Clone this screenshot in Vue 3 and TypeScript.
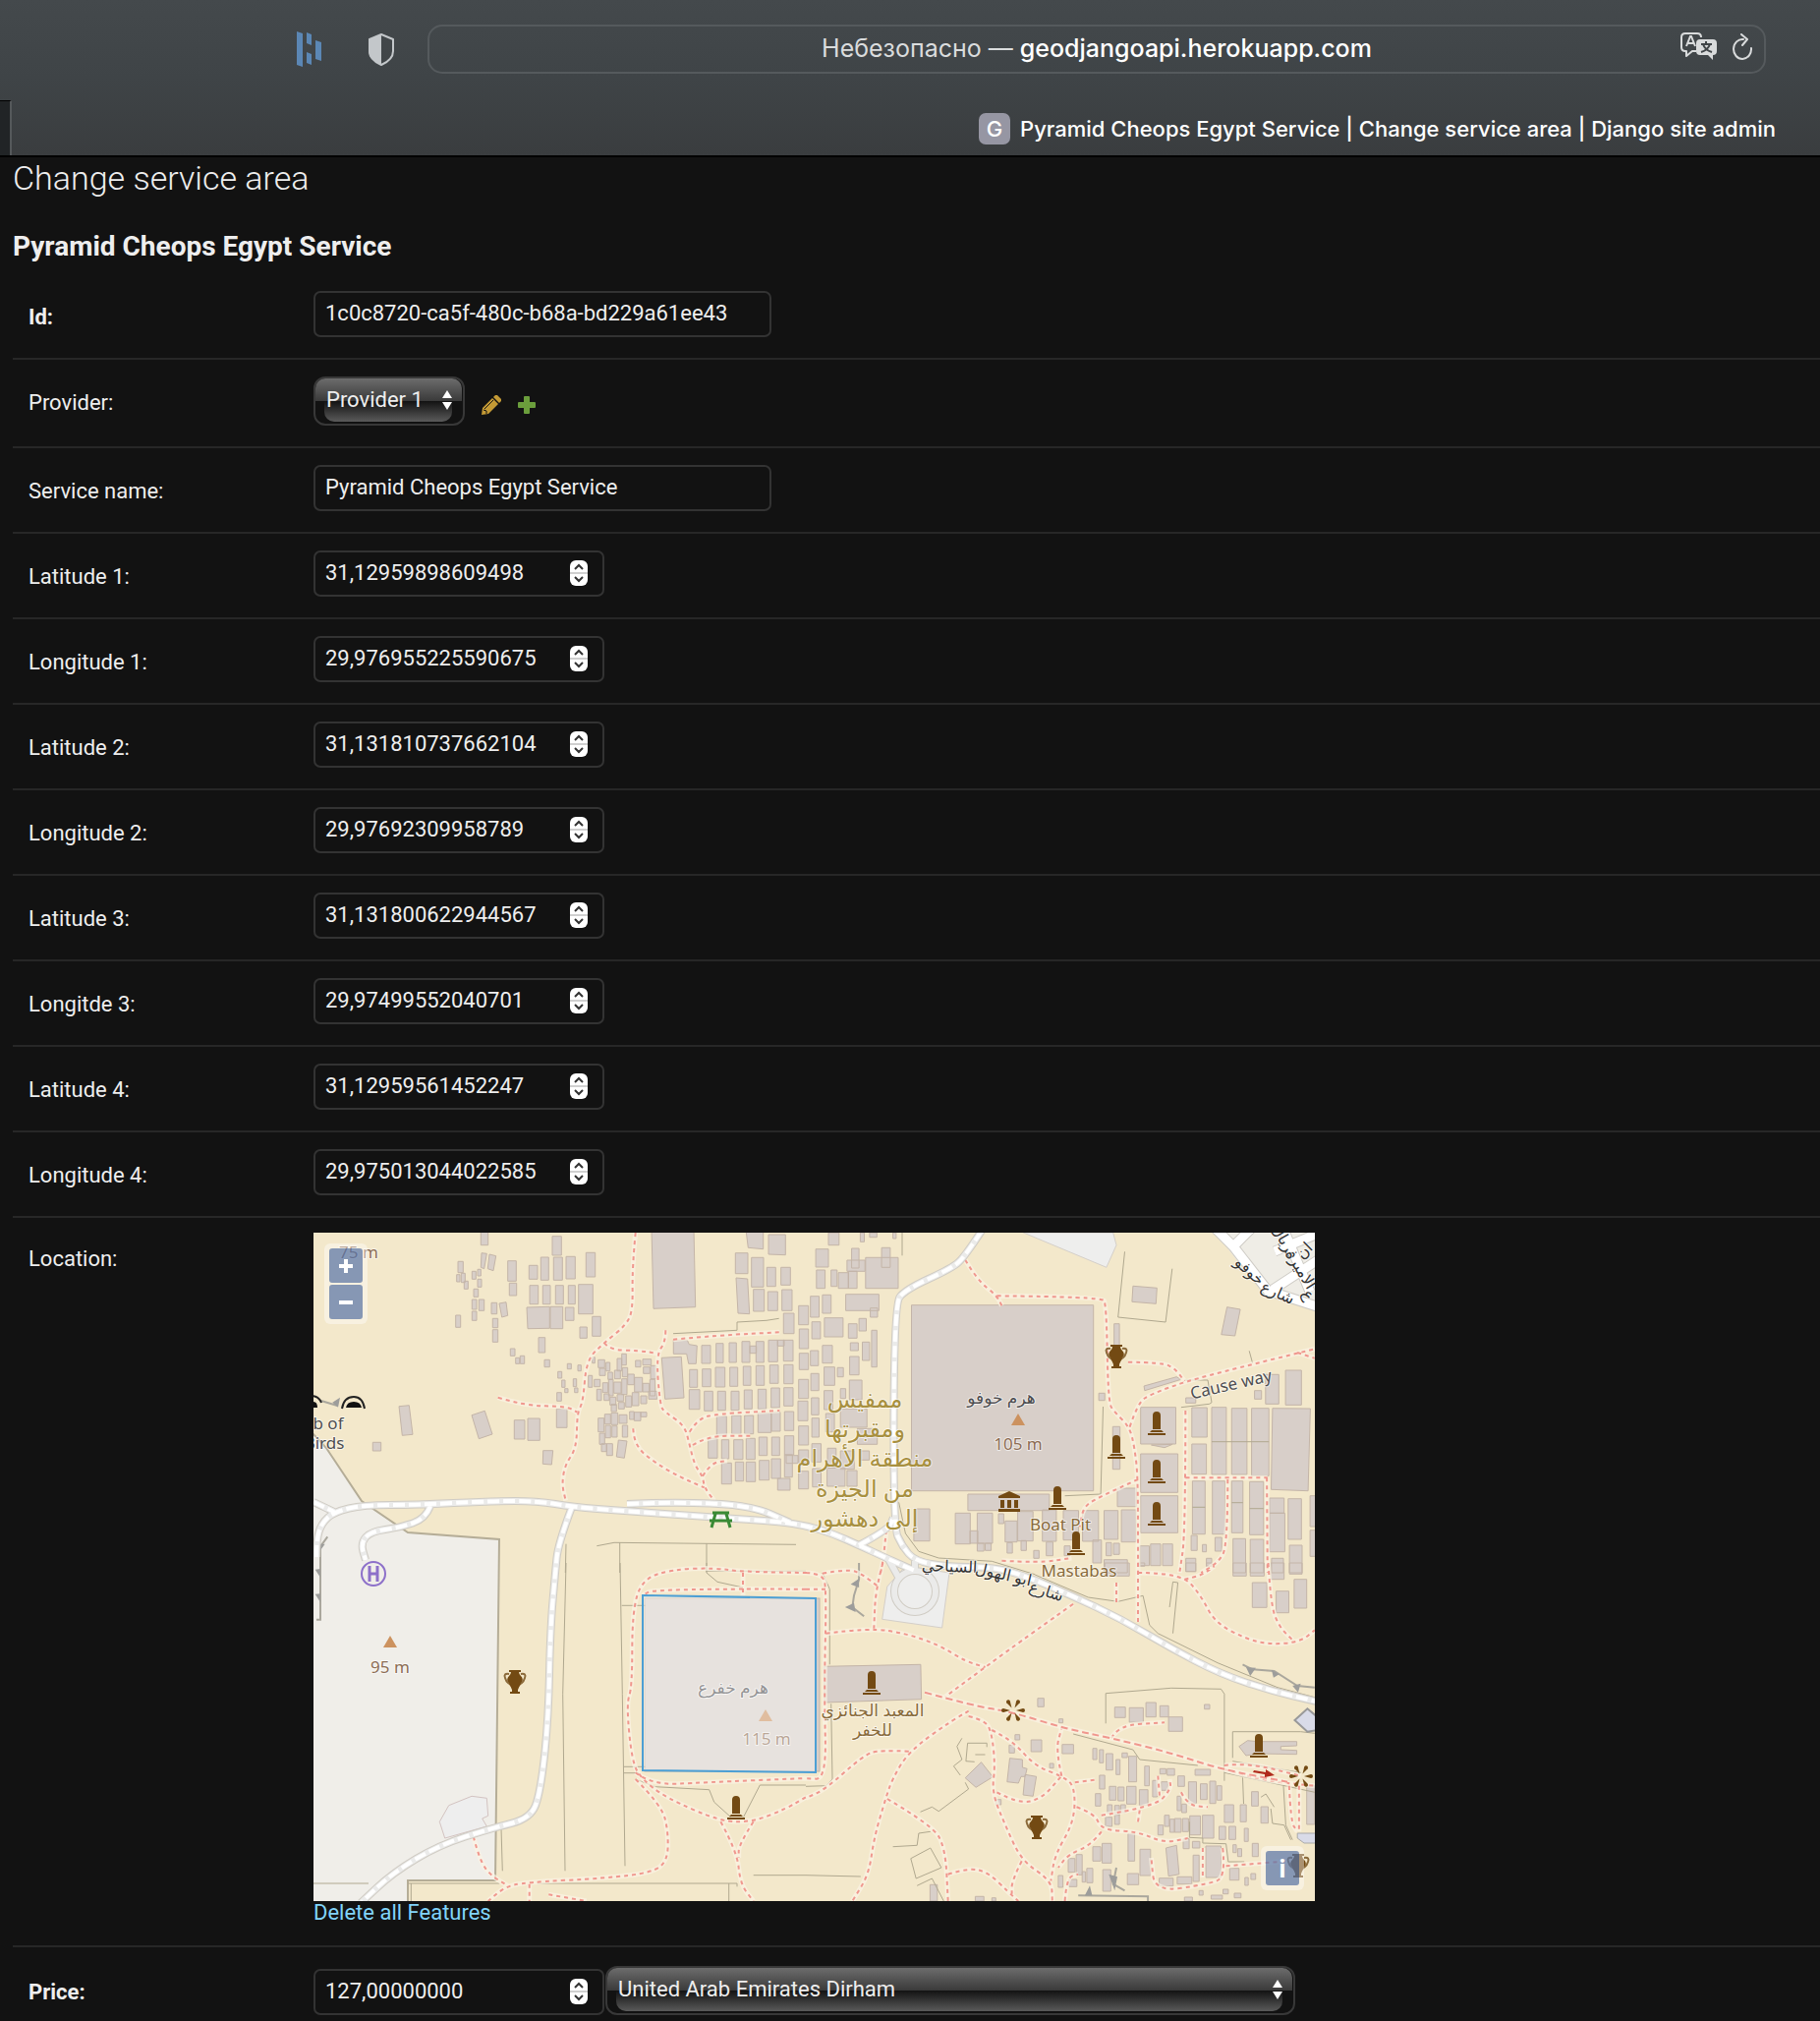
<script setup lang="ts">
import { ref } from 'vue'

interface Field {
  id: string
  label: string
  value: string
  kind: 'text' | 'provider' | 'number'
  required?: boolean
}

const fields = ref<Field[]>([
  { id: 'id', label: 'Id:', value: '1c0c8720-ca5f-480c-b68a-bd229a61ee43', kind: 'text', required: true },
  { id: 'provider', label: 'Provider:', value: 'Provider 1', kind: 'provider' },
  { id: 'service_name', label: 'Service name:', value: 'Pyramid Cheops Egypt Service', kind: 'text' },
  { id: 'lat1', label: 'Latitude 1:', value: '31,12959898609498', kind: 'number' },
  { id: 'lon1', label: 'Longitude 1:', value: '29,976955225590675', kind: 'number' },
  { id: 'lat2', label: 'Latitude 2:', value: '31,131810737662104', kind: 'number' },
  { id: 'lon2', label: 'Longitude 2:', value: '29,97692309958789', kind: 'number' },
  { id: 'lat3', label: 'Latitude 3:', value: '31,131800622944567', kind: 'number' },
  { id: 'lon3', label: 'Longitde 3:', value: '29,97499552040701', kind: 'number' },
  { id: 'lat4', label: 'Latitude 4:', value: '31,12959561452247', kind: 'number' },
  { id: 'lon4', label: 'Longitude 4:', value: '29,975013044022585', kind: 'number' },
])
const price = ref('127,00000000')
const currency = ref('United Arab Emirates Dirham')

/* The map is stored as four sheets, each with its own origin and scale. */
type Sheet = 'nw' | 'ne' | 'sw' | 'se'
const sheets: Record<Sheet, [number, number, number, number]> = {
  nw: [-19, -14, 1 / 3, 1 / 3],
  ne: [501, -14, 0.338, 1 / 3],
  sw: [-19, 336, 1 / 3, 1 / 3],
  se: [501, 336, 0.338, 1 / 3],
}

function project(sheet: Sheet, list: string): [number, number][] {
  const [ox, oy, sx, sy] = sheets[sheet]
  const n = list.trim().split(/[\s,]+/).map(Number)
  const out: [number, number][] = []
  for (let i = 0; i + 1 < n.length; i += 2) {
    out.push([Math.round((ox + n[i] * sx) * 10) / 10, Math.round((oy + n[i + 1] * sy) * 10) / 10])
  }
  return out
}

function curve(p: [number, number][]): string {
  let d = `M${p[0][0]} ${p[0][1]}`
  for (let i = 1; i < p.length - 1; i++) {
    d += `Q${p[i][0]} ${p[i][1]} ${(p[i][0] + p[i + 1][0]) / 2} ${(p[i][1] + p[i + 1][1]) / 2}`
  }
  const e = p[p.length - 1]
  return d + `L${e[0]} ${e[1]}`
}

const curves = (s: Sheet, lists: string) => lists.split(';').map((l) => curve(project(s, l))).join('')
const lines = (s: Sheet, lists: string) =>
  lists.split(';').map((l) => 'M' + project(s, l).map((q) => q.join(' ')).join('L')).join('')
const boxes = (s: Sheet, lists: string) =>
  lists
    .split(';')
    .map((l) => {
      const [x, y, w, h] = l.trim().split(/\s+/).map(Number)
      return 'M' + project(s, `${x} ${y} ${x + w} ${y} ${x + w} ${y + h} ${x} ${y + h}`).map((q) => q.join(' ')).join('L') + 'Z'
    })
    .join('')
const shapes = (s: Sheet, lists: string) =>
  lists.split(';').map((l) => 'M' + project(s, l).map((q) => q.join(' ')).join('L') + 'Z').join('')
const polygons = (s: Sheet, lists: string[]) => shapes(s, lists.join(';'))

const buildings = [
  boxes('nw', `568 30 22 50;786 53 28 58;751 117 24 70;790 117 27 70;828 115 28 68;715 142 26 42;650 128 26 62;655 196 22 38;889 103 28 74;
    717 203 26 57;757 203 23 57;796 203 24 57;835 203 21 57;866 200 44 90;826 270 26 40;908 298 26 60;870 330 22 34;780 268 38 67;
    498 130 16 34;494 170 10 22;508 166 12 28;517 190 12 24;541 160 12 24;558 154 10 20;558 184 12 24;546 214 14 24;541 246 14 30;562 246 16 34;541 282 14 28;
    600 256 17 34;604 304 16 28;604 338 16 38;491 294 15 37;658 396 14 22;674 424 12 18;688 418 13 24;762 430 16 22;744 362 20 46;
    832 442 12 16;803 466 12 20;864 446 10 18;815 492 10 22;824 518 10 12;850 488 10 24;854 516 10 14;800 530 14 26;908 422 8 18;
    238 682 25 26;670 614 32 58;711 609 37 67;799 580 32 57;
    1345 104 38 63;1394 118 37 90;1441 148 27 58;1484 148 29 54;1400 215 33 67;1444 222 30 58;1487 216 31 64;1492 288 32 62;1538 265 30 58;1540 336 28 60;
    1242 386 27 55;1286 380 22 59;1326 378 22 60;1365 374 24 64;1408 374 24 64;1389 388 20 22;1446 370 28 66;1492 370 29 64;1474 370 20 18;
    1205 460 24 54;1244 458 26 54;1284 453 29 60;1328 453 24 58;1369 450 23 58;1408 448 25 60;1450 446 26 56;1493 445 28 58;1540 410 28 50;
    1204 521 32 60;1250 526 26 60;1291 526 24 58;1332 526 24 58;1372 522 24 58;1414 520 25 60;1454 516 26 60;1493 515 28 56;1538 490 30 58;
    1288 602 30 60;1334 600 28 56;1373 600 27 56;1414 592 40 60;1455 590 27 58;1495 588 28 58;1536 556 30 60;1538 632 30 58;
    1262 670 28 60;1303 674 22 58;1340 674 28 60;1378 670 27 64;1417 666 25 56;1456 666 24 56;1495 662 28 58;1500 722 36 24;
    1303 745 30 64;1345 742 25 58;1378 742 28 60;1418 737 30 60;1455 732 28 60;1495 720 24 68;1474 792 38 36;1538 705 30 40;1538 770 30 54;
    926 430 20 24;950 438 12 26;984 426 14 38;998 412 14 34;1040 432 16 20;1062 428 26 18;930 456 18 22;956 468 14 22;976 462 18 26;1000 454 16 28;1064 452 20 20;1086 448 18 40;
    896 478 12 36;914 490 18 22;940 500 16 30;958 490 14 50;974 498 22 34;998 488 16 48;1016 474 20 32;1037 484 24 44;1062 502 20 26;1084 490 16 50;
    922 520 14 34;944 534 16 20;962 544 18 24;984 536 20 20;1010 540 18 34;1030 530 20 40;1056 540 18 24;1080 526 26 24;966 566 16 22;988 560 18 20;
    926 608 18 42;946 596 18 30;966 592 20 36;990 598 24 26;1022 588 14 24;1036 590 20 26;1056 590 18 14;930 654 16 34;948 630 16 38;968 632 16 34;1000 630 16 36;936 686 16 24;952 686 18 36`),
  shapes('nw', `1089 30,1218 30,1223 269,1095 274;708 270,778 268,778 334,711 335;318 572,349 569,360 658,328 661;540 599,580 586,603 657,562 671;
    758 707,788 707,784 750,757 748;1156 370,1198 370,1204 383,1228 387,1225 442,1202 442,1196 412,1156 412;1120 424,1180 421,1188 546,1130 550;
    1378 40,1430 40,1430 92,1384 88;1446 48,1498 48,1498 110,1446 108;1347 180,1382 183,1388 290,1353 288;570 104,586 106,578 152,568 148;
    594 108,614 113,606 158,589 152;624 258,645 254,650 295,632 300;988 675,1014 678,1006 730,982 726`),
  boxes('ne', `318 263 548 567;68 42 32 38;30 92 38 55;138 90 22 60;124 126 54 34;228 88 26 60;180 118 98 94;98 164 30 48;128 160 26 52;32 156 26 56;76 156 18 50;
    192 42 22 14;164 42 12 28;262 42 10 18;14 236 26 64;50 232 26 56;120 230 100 50;194 272 22 28;56 302 56 58;18 314 26 52;128 320 26 44;160 304 22 38;
    134 378 24 24;170 376 22 56;198 340 16 112;50 386 30 54;14 402 24 46;132 420 28 56;55 452 32 56;95 454 18 28;15 472 24 52;131 492 38 60;
    55 524 26 58;104 518 16 30;17 546 22 52;60 594 26 56;104 580 80 56;18 608 22 58;155 640 60 48;65 700 26 60;18 686 28 56;165 708 26 28;104 708 42 56;64 760 54 56;20 762 26 56;124 768 30 48;
    325 885 48 98;450 898 45 94;516 898 46 92;494 952 24 38;516 990 20 24;540 990 18 22;600 922 36 64;580 900 16 30;638 893 46 90;606 988 16 32;648 982 16 30;
    712 888 42 96;775 890 46 90;833 890 48 94;898 890 42 88;950 888 44 98;724 986 20 42;686 1012 16 24;778 998 18 30;864 980 26 70;904 988 16 40;926 990 18 34;898 1040 70 40;
    488 840 245 50;938 822 58 56;882 532 18 22;928 320 16 66;924 634 22 130;1008 575 106 112;1008 717 112 118;1008 845 112 113;
    1162 576 46 90;1162 687 44 92;1222 575 44 205;1282 578 46 202;1342 578 52 206;1384 475 40 90;1444 462 48 106;1351 524 21 26;1144 546 30 16;
    1164 800 38 162;1224 800 38 162;1282 800 34 158;1336 802 42 162;1396 852 44 46;1396 898 46 118;1452 854 40 124;1402 1036 36 44;1456 996 38 84;1518 845 20 94;1518 950 20 80;
    1160 966 18 46;1194 994 12 22;1232 972 20 42;1286 976 38 104;1338 978 40 102;1006 998 28 60;1038 992 30 66;1074 992 30 66;1144 1036 30 40;1206 1036 16 24`),
  shapes('ne', `985 205,1057 211,1054 259,982 253;1268 269,1308 276,1292 357,1251 353;1405 578,1519 579,1512 830,1401 826;1018 510,1116 482,1130 490,1020 524;1040 690,1104 688,1080 698`),
  boxes('se', `930 440 32 32;974 442 42 44;1024 426 30 44;1066 436 26 34;1092 470 42 44;1200 432 16 14;698 413 19 26;762 476 12 12;630 524 14 16;612 556 16 24;678 540 32 36;734 612 12 14;572 722 16 16;
    1000 0 20 10;1144 0 30 26;1206 0 16 10;1286 0 40 40;1338 0 42 40;1400 0 40 50;1456 0 38 34;900 0 74 40;1344 60 44 76;1416 86 38 66;1470 50 38 88;
    772 554 34 28;864 566 12 34;884 570 12 40;904 582 20 50;934 600 12 46;952 580 16 14;972 590 24 78;1020 620 14 60;1066 628 18 16;1088 628 22 20;1172 630 46 18;
    884 648 16 42;914 682 20 42;940 684 18 42;966 682 28 54;1004 692 26 48;1044 664 14 50;1070 668 20 26;1120 650 20 32;1152 668 24 66;1188 674 20 48;1216 666 18 68;1238 680 14 44;
    872 704 16 38;908 738 14 26;930 740 14 30;948 738 14 24;902 776 20 28;930 768 14 30;1118 712 12 44;1132 736 14 26;1080 770 14 34;1096 782 14 40;1060 800 16 30;1110 780 20 42;1134 780 18 40;
    1156 772 32 58;1194 770 34 70;1244 804 20 40;1274 804 20 40;1260 738 28 54;1308 738 18 52;1342 698 20 44;1370 744 22 50;1136 842 18 30;1164 850 22 20;1320 810 12 40;1344 856 18 40;1286 860 10 24;1300 872 12 24;
    864 866 24 44;892 856 28 60;970 826 20 84;1006 874 32 80;1166 892 18 80;1204 864 46 96;790 902 20 42;814 890 18 62;846 932 18 44;832 942 10 32;894 936 24 66;968 948 34 34;760 954 14 36;792 966 24 22;
    1064 962 42 24;1118 958 44 22;1276 932 28 36;1322 960 10 24;1340 948 14 18;1220 1014 34 12;1256 996 16 14;1290 1008 20 14;1184 1000 12 14;1140 1020 24 12;510 1018 26 14;560 1022 12 10;374 982 22 50;
    1508 680 24 118`),
  shapes('se', `54 316,346 310,348 416,56 426;480 656,528 608,563 653,512 685;614 596,652 600,652 624,666 628,660 652,648 652,640 672,606 668;660 646,694 652,684 712,654 708;1084 870,1116 862,1124 950,1092 956;1304 560,1330 542,1360 545,1478 545,1478 558,1430 560,1430 570,1478 572,1478 584,1360 582,1325 588`),
].join('')

const footpaths = [
  curves('nw', `1040 42 1030 150 1032 280 1010 325 945 378 890 430 880 560 862 590 860 700 825 750 815 810 827 860;945 378 960 400 1050 402 1105 410;
    1132 340 1132 375 1103 415 1115 570 1130 590 1190 630 1205 690 1220 750 1245 785 1250 820 1280 860;1155 368 1300 355 1480 346;620 545 700 570 830 572 862 590;
    1033 640 1035 690 1100 745 1180 790 1250 820;1205 650 1230 610 1290 595 1480 585;1215 690 1260 662 1390 662;1245 785 1270 745 1320 738`),
  curves('ne', `480 125 515 185 575 235 590 265;575 235 890 238 905 260 910 560 930 590 975 635 990 700 1000 790 1000 1080;970 437 1070 438 1110 455 1140 495;
    975 635 1000 560 1040 535 1140 497 1300 455 1532 397;1480 408 1532 425;1143 585 1143 960 1125 1080;1143 790 1270 790 1390 790;1388 790 1390 1080;
    1270 795 1270 1000 1240 1050 1190 1080;1000 795 880 850 835 880 825 940;590 1043 700 1050 800 1035;242 950 235 1030 225 1080`),
  curves('sw', `1563 30 1370 28 1280 15 1150 20 1060 50 1030 150 1030 380 1012 430 1030 610 1060 660 1130 715 1300 790 1400 790 1500 750 1560 715;1560 80 1100 78 1060 100;
    1368 30 1368 100;1040 640 1090 678 1250 670 1560 657;1040 660 1120 740 1140 820 1138 910 1090 945 950 962 700 975 640 990 590 1032;
    545 835 565 910 600 955 650 985;716 980 716 1032;775 1012 890 1032;1300 790 1350 880 1360 980 1400 1032;1400 790 1355 860 1355 900`),
  curves('se', `0 30 50 32 62 80 55 400 62 660 0 658;0 80 62 80;50 32 130 18 170 35 215 70;232 0 210 80 205 200;60 215 190 198 300 215 400 250 480 300 540 318;
    805 125 680 215 540 318 420 408;490 452 440 480 310 575 260 660 240 720 205 840 190 950 140 1032;310 575 220 570 170 590 60 690 0 718;
    490 468 540 480 560 520 570 620 560 700 600 800 650 910 740 970 742 1032;560 510 620 540 690 620 770 650 810 680 808 790 750 890 738 970;
    575 700 640 735 710 720 770 650;770 650 752 570 770 505;245 720 380 800 420 870 428 1032;428 950 490 930 550 945 610 1005 640 1032;650 910 620 970 620 1010;
    810 670 870 662;815 745 870 765 890 815 1000 820 1080 855 1150 840;890 820 860 860 790 890 760 930;890 770 1050 745 1100 690 1095 660;1060 650 1065 710;
    1130 700 1150 740 1210 745;1000 790 1005 755;920 535 940 495 1080 487;1000 0 1000 180;1000 30 1130 30 1190 100 1230 180 1320 230 1400 250 1490 240 1532 205;
    1140 50 1190 40 1230 10;1392 0 1400 130 1425 195 1465 235;935 60 935 120;1260 618 1330 610 1490 650;1260 630 1380 665 1532 680;1455 680 1460 790 1480 820;
    1485 680 1485 820;1195 870 1195 960;1255 870 1265 960 1210 980 1050 1005 1040 900;1265 925 1450 910;780 1032 785 960 820 950`),
].join('')

const processional = curves('se', '358 395 500 435 620 455 780 505 920 535 1100 580 1250 630 1450 668')

const walls = [
  lines('nw', `1155 350 1350 340 1350 315 1440 310 1478 304;922 998 975 988 1530 994;992 988 992 1080;1257 990 1257 1078;828 992 826 1080`),
  lines('ne', `290 42 290 112;960 100 940 300 1083 315 1103 152;895 573 888 840 780 845;1335 403 1345 440;1130 575 1215 565 1222 560 1210 492 1140 492;
    280 865 300 960 340 1015 400 1035 560 1045 690 1085;1222 680 1394 680;1164 880 1202 880;1282 866 1316 866;1336 884 1378 884`),
  lines('sw', `828 0 818 400 825 940;993 0 1000 400 1008 925;998 130 1070 130;1003 622 1070 622;1003 641 1050 641;1257 0 1257 30 1290 58 1368 75;1255 25 1560 25;
    1040 660 1100 683 1265 692 1280 730 1330 775;1370 775 1420 678 1560 678;630 810 634 940;740 978 1350 978 1350 988;1325 978 1325 1032;1400 953 1560 953;345 978 625 978;57 978 225 978;355 978 355 1032`),
  lines('se', `50 30 72 80 72 310;76 430 80 660 60 680 0 682;0 953 165 957;690 36 850 105 940 118 1015 100 1035 190 1060 215 1240 305 1420 380 1532 410;
    903 490 903 398 1100 382 1250 385 1260 400 1260 665;1095 135 1105 58 1120 60 1105 215;805 522 985 570 1005 600 1180 618;345 760 380 745 400 758 490 690 480 670;
    545 562 545 550 487 550 482 605 508 607;470 535 455 560 470 600 445 620 465 648;510 585 540 585;262 866 335 862 340 825 375 820;316 902 375 870 408 930 332 963 316 902;
    335 985 380 963 415 1032;1438 680 1445 800 1465 845;1315 655 1318 735;1370 715 1385 705 1410 745;1400 750 1405 795 1440 800 1460 845;
    1155 790 1155 838 1195 840 1195 855 1265 857 1272 912 1320 912;1260 640 1532 700;1285 605 1490 640;1285 595 1285 515 1490 515 1532 520`),
].join('')

const tracks =
  curve([[3, 330], [3, 313], [8, 296], [21, 284], [51, 277], [104, 277], [181, 273], [228, 273], [264, 279], [314, 283], [414, 290], [474, 294], [501, 298], [528, 306], [555, 318], [585, 332], [612, 344]]) +
  curve([[0, 274], [21, 284]]) +
  curve([[119, 278], [114, 291], [88, 300], [58, 304], [48, 316], [53, 333]]) +
  curve([[263, 279], [249, 316], [246, 346], [241, 403], [239, 496], [231, 569], [221, 596], [181, 606], [128, 623], [81, 651], [48, 682]]) +
  curve([[680, -2], [663, 24], [650, 36], [602, 58], [591, 73], [590, 299], [599, 319], [612, 334], [645, 340], [690, 340], [724, 349], [771, 369], [822, 393], [873, 423], [923, 449], [974, 466], [1021, 477]]) +
  curve([[555, 318], [585, 302], [590, 290]]) +
  curve([[319, 276], [364, 274], [444, 277], [485, 295]])

const ring = 'M633 365A21 21 0 1 1 591 365A21 21 0 1 1 633 365M585 332L595 350M612 334V345'
const streets = 'M914-8L936 14L971 59L1024 76M936 14L954-4M986-6L1014 60M978 19L1022 1M976 58L1022 28'
const gardens = polygons('ne', ['655 42,905 148,935 80,925 42']) + polygons('se', ['245 72,230 172,410 198,432 30,300 10'])
const residential = polygons('ne', ['1225 30,1300 130,1440 240,1540 275,1540 30'])
const court = polygons('sw', ['458 840,442 790,470 740,540 712,586 718,590 772,572 780,586 804'])
const cliffs = lines('se', `160 0 160 50 145 100 140 135 175 163;1315 310 1345 325 1410 330 1480 375 1532 380;935 930 925 980 960 1000;820 1015 1030 1018 1030 1032`) +
  lines('nw', '100 970 78 1000 78 1180;80 555 130 570') +
  lines('sw', '66 173 78 173 78 0')
const cliffTeeth = shapes('se', `135 65,160 48,160 75;118 135,145 122,150 150;1325 318,1355 320,1338 345;1402 326,1425 340,1408 350;1465 375,1490 368,1482 395;912 950,938 958,930 1000;840 1015,855 985,862 1015`) +
  shapes('nw', '66 992,92 992,78 1012;115 560,138 545,132 575') + shapes('sw', '62 20,78 18,78 44;62 95,78 94,78 120')
const pavilion = polygons('se', ['1472 480,1510 445,1540 470,1540 510,1510 515'])
const pool = polygons('se', ['1480 825,1540 825,1540 855,1500 855,1480 840'])

const monuments = [[858, 194], [817, 218], [858, 243], [858, 286], [757, 270], [776, 316], [568, 458], [962, 522], [430, 585]]
const amphoras = [[817, 126], [205, 457], [736, 605], [1002, 644]]
const stars = [[712, 486], [1005, 553]]
const peaks = [[717, 190], [78, 416], [460, 491]]
</script>

<template>
  <div class="page">
    <header class="browser">
      <div class="toolbar">
        <svg class="ext" width="26" height="36" viewBox="0 0 26 36" aria-hidden="true">
          <path d="M0 0l6 2v34l-6-2zM10 1l5 2v11l-5-2zM19 9l6 2v19l-6-2zM10 21l5 2v11l-5-2z" fill="#5b87b5" />
        </svg>
        <svg class="shield" width="28" height="33" viewBox="0 0 28 33" aria-hidden="true">
          <path d="M14 1L26 6v12c0 6-5 11-12 14C7 29 2 24 2 18V6z" fill="none" stroke="#c3c7ca" stroke-width="2" stroke-linejoin="round" />
          <path d="M14 1v31C7 29 1 24 1 18V6z" fill="#c3c7ca" />
        </svg>
        <div class="address">
          <button type="button" class="url"><span>Небезопасно — </span>geodjangoapi.herokuapp.com</button>
          <div class="address-tools">
            <button type="button" aria-label="Translate">
              <svg width="38" height="28" viewBox="0 0 38 28">
                <path d="M16 19h-4l-6 5v-5H5q-4 0-4-4V5q0-4 4-4h12q4 0 4 4" fill="none" stroke="#d9dbdc" stroke-width="2" stroke-linejoin="round" />
                <path d="M6 14l4-10h1l4 10M8 11h6" fill="none" stroke="#d9dbdc" stroke-width="2" />
                <path d="M20 7h13q4 0 4 4v8q0 4-4 4v5l-5-5h-8q-4 0-4-4v-8q0-4 4-4z" fill="#d9dbdc" />
                <path d="M21 12h11M26 9v3M30 12q-2 6-9 8M23 12q2 6 9 8" fill="none" stroke="#404548" stroke-width="2" />
              </svg>
            </button>
            <button type="button" aria-label="Reload">
              <svg width="22" height="27" viewBox="0 0 22 27">
                <path d="M12 6A9 10 0 1 0 20 15M10 1l6 5-5 6" fill="none" stroke="#d9dbdc" stroke-width="2" stroke-linecap="round" stroke-linejoin="round" />
              </svg>
            </button>
          </div>
        </div>
      </div>
      <div class="tabs">
        <div class="tab-edge"></div>
        <div class="tab"><span class="favicon">G</span><span>Pyramid Cheops Egypt Service | Change service area | Django site admin</span></div>
      </div>
    </header>

    <main class="content">
      <h1>Change service area</h1>
      <h2>Pyramid Cheops Egypt Service</h2>
      <form @submit.prevent>
        <div v-for="f in fields" :key="f.id" class="row">
          <label :for="f.id" :class="{ required: f.required }">{{ f.label }}</label>
          <input v-if="f.kind === 'text'" :id="f.id" v-model="f.value" class="box" type="text" />
          <div v-else-if="f.kind === 'provider'" class="related">
            <div class="select provider">
              <select :id="f.id" v-model="f.value"><option>Provider 1</option></select>
              <svg class="arrows" width="10" height="20" viewBox="0 0 10 20" aria-hidden="true"><path d="M5 0l5 8H0zM5 20L0 12h10z" fill="#fff" /></svg>
            </div>
            <a href="#" aria-label="Change selected provider">
              <svg width="20" height="20" viewBox="0 0 20 20">
                <path d="M0 20l1-7L11 3l6 6L7 19z" fill="#c49a35" /><path d="M12 2l2-2h2l4 4v2l-2 2z" fill="#c49a35" />
                <path d="M3 14l9-9M2 15l3 1 0 3" stroke="#121212" fill="none" />
              </svg>
            </a>
            <a href="#" aria-label="Add another provider">
              <svg width="18" height="18" viewBox="0 0 18 18"><path d="M6 1q0-1 1-1h4q1 0 1 1v5h5q1 0 1 1v4q0 1-1 1h-5v5q0 1-1 1H7q-1 0-1-1v-5H1q-1 0-1-1V7q0-1 1-1h5z" fill="#6b9e3c" /></svg>
            </a>
          </div>
          <div v-else class="box number">
            <input :id="f.id" v-model="f.value" type="text" inputmode="decimal" />
            <button type="button" class="spin" :aria-label="'Step ' + f.label">
              <svg width="18" height="26" viewBox="0 0 18 26"><path d="M0 13h18" stroke="#d0d0d0" stroke-width="2" /><path d="M5 9l4-4 4 4M5 17l4 4 4-4" fill="none" stroke="#333" stroke-width="2" /></svg>
            </button>
          </div>
        </div>

        <div class="row map-row">
          <span class="label">Location:</span>
          <div class="location">
            <div class="map">
              <svg class="canvas" viewBox="0 0 1019 680" role="img" aria-label="Map">
                <rect width="1019" height="680" fill="#f3e8cb" />
                <path d="M-2 203L13 219L49 273L96 305L189 312L185 659H96V682H-2Z" fill="#f0eee9" stroke="#b5ad97" stroke-width="2" />
                <path :d="residential" fill="#efede6" />
                <path :d="gardens" fill="#eeeeed" stroke="#d4cfc9" />
                <path :d="court" fill="#eeeeee" stroke="#d3c3c1" />
                <path :d="buildings" fill="#d8cfc9" stroke="#c4b5a8" />
                <rect x="337" y="372" width="178" height="176" fill="#d8cfc9" stroke="#c4b5a8" />
                <path :d="walls" class="wall" />
                <path :d="cliffs" fill="none" stroke="#aaa79d" stroke-width="2" />
                <path :d="cliffTeeth" fill="#9d9d9b" />
                <path :d="pavilion" fill="#d9dbe8" stroke="#999" stroke-width="2" />
                <path :d="pool" fill="#d9dbe8" stroke="#aaa" />
                <path :d="footpaths" class="halo" />
                <path :d="footpaths" class="foot" />
                <path :d="processional" class="halo" />
                <path :d="processional" class="foot long" />
                <path :d="streets" fill="none" stroke="#cfccc6" stroke-width="11" />
                <path :d="streets" fill="none" stroke="#fff" stroke-width="9" />
                <path :d="tracks + ring" class="casing" />
                <path :d="tracks + ring" class="track" />
                <path :d="tracks" class="centre" />
                <path d="M957 547l12 2v-3l9 6-10 2v-3l-12-2z" fill="#b02a1c" />

                <g fill="#734a13">
                  <path v-for="m in monuments" :key="m.join()" :transform="`translate(${m[0]} ${m[1]})`" d="M-4 6V-8Q-4-12 0-12Q4-12 4-8V6ZM-5 7H5L7 9H-7ZM-9 10H9V12H-9Z" />
                  <g v-for="a in amphoras" :key="a.join()" :transform="`translate(${a[0]} ${a[1]})`">
                    <path d="M-6-12H6V-10H4Q4-8 6-6Q9-3 7 1Q4 5 3 8V10H5V12H-5V10H-3V8Q-4 5-7 1Q-9-3-6-6Q-4-8-4-10H-6Z" />
                    <path d="M-6-8Q-12-9-10-4Q-9 0-6 2M6-8Q12-9 10-4Q9 0 6 2" fill="none" stroke="#8b6a3a" stroke-width="2" />
                  </g>
                  <g v-for="s in stars" :key="s.join()" :transform="`translate(${s[0]} ${s[1]})`">
                    <path v-for="r in 6" :key="r" :transform="`rotate(${r * 60})`" d="M3 0L10-2Q12-2 12 0Q12 2 10 2Z" />
                  </g>
                  <path d="M697 268L708 263L719 268V270H697ZM699 272H703V280H699ZM706 272H710V280H706ZM713 272H717V280H713ZM697 281H719V284H697Z" />
                </g>
                <path v-for="p in peaks" :key="p.join()" :transform="`translate(${p[0]} ${p[1]})`" d="M0-6L7 6H-7Z" fill="#cc925f" />
                <path d="M406 285H423M403 293H426M409 286L405 300M420 286L424 300" stroke="#3a8a35" stroke-width="3" fill="none" />
                <g fill="none" stroke="#8d70c9"><circle cx="61" cy="347" r="12" fill="#f0eee9" stroke-width="2" /><path d="M57 339V355M65 339V355M57 347H65" stroke-width="3" /></g>
                <path d="M33 178Q34 172 41 172Q48 172 49 178ZM-8 178Q-6 172 0 172Q4 172 4 178Z" fill="#111" />
                <path d="M29 179Q31 167 41 167Q50 167 52 179M-8 168Q4 163 8 173" fill="none" stroke="#222" stroke-width="2" />

                <g class="place" text-anchor="middle">
                  <g class="peak"><text x="46" y="26">75 m</text><text x="717" y="221">105 m</text><text x="78" y="448">95 m</text><text x="461" y="521">115 m</text></g>
                  <g class="dark">
                    <text x="700" y="174">هرم خوفو</text><text x="427" y="469">هرم خفرع</text>
                    <text transform="translate(935 160) rotate(-13)">Cause way</text>
                    <text x="15" y="200">b of</text><text x="11" y="220">Birds</text>
                  </g>
                  <g class="region"><text x="561" y="178">ممفيس</text><text x="561" y="208">ومقبرتها</text><text x="561" y="238">منطقة الأهرام</text><text x="561" y="269">من الجيزة</text><text x="561" y="299">إلى دهشور</text></g>
                  <g class="site"><text x="760" y="303">Boat Pit</text><text x="779" y="350">Mastabas</text><text x="569" y="492">المعبد الجنائزي</text><text x="569" y="512">للخفر</text></g>
                  <g class="street">
                    <text transform="translate(647 345) rotate(2)">السياحي</text>
                    <text transform="translate(701 353) rotate(13)">ابو الهول</text>
                    <text transform="translate(744 370) rotate(18)">شارع</text>
                    <text transform="translate(949 43) rotate(42)">خوفو</text>
                    <text transform="translate(979 66) rotate(24)">شارع</text>
                    <text transform="translate(984 12) rotate(60)">فريال</text>
                    <text transform="translate(1000 40) rotate(58)">الاميره</text>
                    <text transform="translate(1012 22) rotate(-45)">ان</text>
                    <text transform="translate(1008 66) rotate(60)">ع</text>
                  </g>
                </g>
                <path d="M335 369L511 372V549L335 547Z" fill="#fff" fill-opacity="0.4" stroke="#4c9fd4" stroke-width="2" />
              </svg>
              <div class="map-zoom">
                <button type="button" aria-label="Zoom in"><svg width="14" height="14" viewBox="0 0 14 14"><path d="M7 0v14M0 7h14" stroke="#fff" stroke-width="4" /></svg></button>
                <button type="button" aria-label="Zoom out"><svg width="14" height="14" viewBox="0 0 14 14"><path d="M0 7h14" stroke="#fff" stroke-width="4" /></svg></button>
              </div>
              <div class="map-info"><button type="button">i</button></div>
            </div>
            <a class="clear" href="#">Delete all Features</a>
          </div>
        </div>

        <div class="row price">
          <label for="price" class="required">Price:</label>
          <div class="money">
            <div class="box number">
              <input id="price" v-model="price" type="text" inputmode="decimal" />
              <button type="button" class="spin" aria-label="Step price">
                <svg width="18" height="26" viewBox="0 0 18 26"><path d="M0 13h18" stroke="#d0d0d0" stroke-width="2" /><path d="M5 9l4-4 4 4M5 17l4 4 4-4" fill="none" stroke="#333" stroke-width="2" /></svg>
              </button>
            </div>
            <div class="select currency">
              <select v-model="currency" aria-label="Currency"><option>United Arab Emirates Dirham</option></select>
              <svg class="arrows" width="10" height="20" viewBox="0 0 10 20" aria-hidden="true"><path d="M5 0l5 8H0zM5 20L0 12h10z" fill="#fff" /></svg>
            </div>
          </div>
        </div>
      </form>
    </main>
  </div>
</template>

<style>
body {
  margin: 0;
  background: #121212;
}
</style>

<style scoped>
* {
  box-sizing: border-box;
}
.page {
  color: #eee;
  font-family: Roboto, 'Liberation Sans', sans-serif;
  font-size: 22px;
  overflow: hidden;
}
button {
  border: 0;
  padding: 0;
  background: none;
  font: inherit;
  color: inherit;
}
svg {
  display: block;
}
.browser {
  background: linear-gradient(#44494c, #3f4447 50%, #3a3d3f);
  border-bottom: 2px solid #000;
  font-family: Inter, 'Liberation Sans', sans-serif;
}
.toolbar {
  display: flex;
  align-items: center;
  padding: 25px 55px 0 302px;
}
.shield {
  margin: 0 33px 0 46px;
}
.address {
  flex: 1;
  display: flex;
  align-items: center;
  justify-content: center;
  position: relative;
  height: 50px;
  border: 2px solid #555a5d;
  border-radius: 15px;
}
.url {
  padding-bottom: 2px;
  font-size: 25px;
  font-weight: 500;
  color: #fff;
  white-space: pre;
}
.url span {
  color: #dadcdd;
  font-weight: 400;
}
.address-tools {
  position: absolute;
  right: 11px;
  top: 6px;
  display: flex;
  gap: 14px;
}
.tabs {
  display: flex;
  justify-content: space-between;
  margin-top: 27px;
  height: 56px;
}
.tab-edge {
  width: 12px;
  background: #212426;
  border-top: 1px solid #000;
  border-right: 2px solid #55595b;
}
.tab {
  display: flex;
  align-items: center;
  gap: 10px;
  padding: 2px 45px 0 0;
  color: #fff;
  font-weight: 500;
  font-size: 22px;
}
.favicon {
  width: 32px;
  height: 32px;
  line-height: 32px;
  border-radius: 7px;
  background: #9696a3;
  text-align: center;
}
.content {
  padding-left: 13px;
}
h1 {
  margin: 0;
  padding-top: 1px;
  font-size: 34px;
  line-height: 40px;
  font-weight: 300;
}
h2 {
  margin: 32px 0 10px;
  font-size: 28px;
  line-height: 36px;
  font-weight: 700;
}
.row {
  display: flex;
  padding: 17px 0 21px 16px;
  border-bottom: 2px solid #272727;
}
.row label,
.label {
  flex: none;
  width: 290px;
  height: 47px;
  padding-top: 7px;
  line-height: 40px;
}
.row .required {
  font-weight: 700;
}
.box {
  height: 47px;
  width: 466px;
  padding: 0 10px 2px;
  border: 2px solid #333;
  border-radius: 7px;
  background: #121212;
  color: #eee;
  font-family: inherit;
  font-size: 22px;
}
.number {
  display: flex;
  align-items: center;
  width: 296px;
  padding-right: 15px;
}
.number input {
  flex: 1;
  min-width: 0;
  padding: 0;
  border: 0;
  background: none;
  color: inherit;
  font: inherit;
}
.spin {
  background: #fff;
  border-radius: 6px;
  overflow: hidden;
}
.related {
  display: flex;
  align-items: center;
  gap: 17px;
}
.related a {
  padding-top: 8px;
}
.select {
  position: relative;
  height: 50px;
  border: 2px solid #383838;
  border-radius: 12px;
}
.select::before {
  content: '';
  position: absolute;
  inset: 0 1px 23px 0;
  border-radius: 10px 10px 0 0;
  background: linear-gradient(#6c6c6c, #3a3a3a);
}
.select::after {
  content: '';
  position: absolute;
  inset: 23px 11px 2px 9px;
  border-radius: 0 0 10px 10px;
  background: linear-gradient(#121212, #5a5a5a);
}
.select select {
  position: relative;
  z-index: 1;
  width: 100%;
  height: 42px;
  padding: 0 12px 0 11px;
  border: 0;
  appearance: none;
  background: none;
  color: #eee;
  font: inherit;
}
.arrows {
  position: absolute;
  z-index: 1;
  right: 11px;
  top: 12px;
}
.provider {
  width: 154px;
}
.currency {
  width: 702px;
}
.money {
  display: flex;
  align-items: flex-end;
  gap: 1px;
}
.map-row {
  padding-top: 15px;
}
.price {
  padding-top: 19px;
  padding-bottom: 8px;
  border-bottom: 0;
}
.location {
  flex: 0 1 1019px;
}
.map {
  position: relative;
  overflow: hidden;
}
.canvas {
  width: 100%;
  height: auto;
}
.clear {
  display: block;
  color: #81d4fa;
  text-decoration: none;
  line-height: 24px;
}
.map-zoom,
.map-info {
  position: absolute;
  left: 11px;
  top: 11px;
  display: grid;
  gap: 2px;
  padding: 5px;
  border-radius: 6px;
  background: rgba(255, 255, 255, 0.4);
}
.map-info {
  left: auto;
  top: auto;
  right: 11px;
  bottom: 11px;
}
.map-zoom button,
.map-info button {
  display: grid;
  place-items: center;
  width: 34px;
  height: 35px;
  border-radius: 3px;
  background: rgba(20, 62, 136, 0.5);
  color: #fff;
  font-weight: 700;
  font-size: 26px;
}
.wall {
  fill: none;
  stroke: #b0a88f;
}
.halo {
  fill: none;
  stroke: #fbf3e4;
  stroke-width: 5;
  opacity: 0.7;
}
.foot {
  fill: none;
  stroke: #f0978e;
  stroke-width: 2;
  stroke-dasharray: 4 4;
}
.foot.long {
  stroke-dasharray: 7 4;
}
.casing {
  fill: none;
  stroke: #d0ccc4;
  stroke-width: 8;
  stroke-linejoin: round;
}
.track {
  fill: none;
  stroke: #ebebea;
  stroke-width: 6;
  stroke-linejoin: round;
}
.centre {
  fill: none;
  stroke: #fff;
  stroke-width: 4;
  stroke-dasharray: 12 4;
}
.place {
  font-family: 'Noto Sans', 'DejaVu Sans', sans-serif;
  font-size: 17px;
  paint-order: stroke;
  stroke: rgba(255, 255, 255, 0.6);
  stroke-width: 2px;
  stroke-linejoin: round;
}
.peak {
  fill: #8d6d54;
}
.dark {
  fill: #4e4e50;
}
.region {
  fill: #a8903f;
  font-size: 24px;
}
.site {
  fill: #886a3a;
}
.street {
  fill: #333;
  font-size: 16px;
}
</style>
